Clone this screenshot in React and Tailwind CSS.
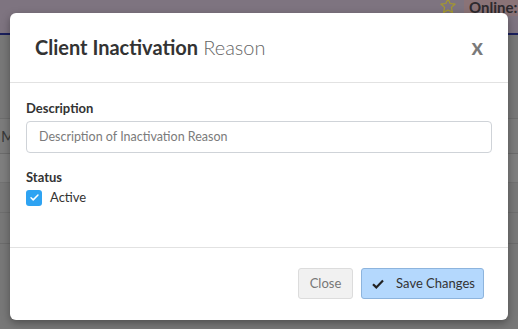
import React from "react";

const font = { fontFamily: 'Lato, "Open Sans", sans-serif' };

const Backdrop = () => (
  <div className="flex flex-col h-full">
    <div className="h-[33px] bg-[#7e7480] flex items-start pl-[437px] shrink-0 overflow-hidden">
      <svg width="22" height="18" viewBox="0 0 24 24" className="mt-[-3px] shrink-0">
        <path
          d="M12 2.5l2.9 6.2 6.6.7-5 4.5 1.4 6.6L12 17.2l-5.9 3.3 1.4-6.6-5-4.5 6.6-.7z"
          fill="none"
          stroke="#a69a2c"
          strokeWidth="1.6"
          strokeLinejoin="round"
        />
      </svg>
      <div className="ml-[5px] shrink-0 whitespace-nowrap bg-[#8a7377] h-[22px] pl-[5px] pr-2 -mt-[6px] pt-[4px] text-[15px] font-bold text-[#2e2a2e] leading-[18px]">
        Online: 11
      </div>
    </div>
    <div className="h-[2px] bg-[#1a1f5c] shrink-0" />
    <div className="flex-1 bg-[#787878] flex flex-col">
      <div className="h-[84px] border-b border-[#6e6e6e]" />
      <div className="h-[35px] bg-[#7c7c7c] border-b border-[#6c6c6c] text-[15px] text-[#3a3a3a] pl-[1px] pt-[6px]">
        M
      </div>
      <div className="h-[29px] bg-[#7f7f7f] border-b border-[#727272]" />
      <div className="h-[30px] border-b border-[#6e6e6e]" />
      <div className="h-[31px] border-b border-[#6c6c6c]" />
    </div>
  </div>
);

export default function App() {
  return (
    <div className="relative w-[518px] h-[329px] overflow-hidden" style={font}>
      <Backdrop />
      <div className="absolute left-[10px] top-[13px] w-[498px] h-[307px] bg-white rounded-[6px] shadow-[0_3px_9px_rgba(0,0,0,0.35)] flex flex-col">
        <div className="h-[70px] border-b border-[#e2e2e2] flex items-center justify-between pl-[25px] pr-[25px]">
          <div className="text-[20px] text-[#333] leading-none -mt-[1px]">
            <span className="font-bold">Client Inactivation</span>{" "}
            <span className="font-light text-[#666]">Reason</span>
          </div>
          <span className="text-[22px] font-bold text-[#7a7a7a] leading-none -mt-[2px]">x</span>
        </div>
        <div className="h-[165px] border-b border-[#e2e2e2] px-[16px] pt-[15px]">
          <div className="text-[13px] font-bold text-[#333] leading-[20px]">Description</div>
          <div className="mt-[3px] h-[32px] rounded-[4px] border border-[#cfd3d8] flex items-center pl-[12px] text-[12.5px] text-[#7b7b7b]">
            Description of Inactivation Reason
          </div>
          <div className="mt-[14px] text-[13px] font-bold text-[#333] leading-[20px]">Status</div>
          <div className="mt-[1px] flex items-center gap-[8px]">
            <div className="w-[16px] h-[16px] rounded-[3px] bg-[#2ea3f2] flex items-center justify-center">
              <svg width="11" height="11" viewBox="0 0 12 12">
                <path d="M2.2 6.3l2.4 2.3 5.2-5.3" fill="none" stroke="#fff" strokeWidth="1.6" strokeLinecap="round" strokeLinejoin="round" />
              </svg>
            </div>
            <span className="text-[13px] text-[#333]">Active</span>
          </div>
        </div>
        <div className="flex-1 flex justify-end items-start pt-[20px] pr-[24px] gap-[8px]">
          <button className="h-[31px] w-[55px] rounded-[3px] border border-[#dcdcdc] bg-[#f1f1f1] text-[13px] text-[#777]">
            Close
          </button>
          <button className="h-[31px] w-[123px] rounded-[3px] border border-[#8db4dd] bg-[#b4d8fd] text-[13px] text-[#333] flex items-center justify-center gap-[12px] pl-[2px]">
            <svg width="12" height="10" viewBox="0 0 12 10">
              <path d="M1 5.2l3.3 3.2L11 1.6" fill="none" stroke="#222" strokeWidth="2.2" />
            </svg>
            Save Changes
          </button>
        </div>
      </div>
    </div>
  );
}
